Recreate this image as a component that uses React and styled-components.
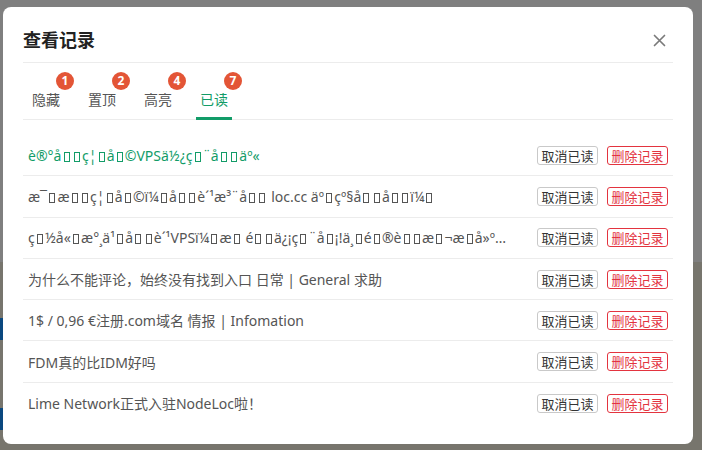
import React, { useState } from "react";
import styled, { createGlobalStyle } from "styled-components";

const GlobalStyle = createGlobalStyle`
  html, body {
    margin: 0;
    padding: 0;
    width: 702px;
    height: 450px;
    overflow: hidden;
    font-family: "Noto Sans", "Noto Sans CJK SC", sans-serif;
  }
`;

const records = [
  { id: 1, title: "记双福利VPS使用分享", garbled: true },
  { id: 2, title: "每月福利：免费注册 loc.cc 二级域名：", garbled: true },
  { id: 3, title: "白嫖永久免费VPS，无需信用卡!一键脚本搭建节点教程", garbled: true },
  { id: 4, title: "为什么不能评论，始终没有找到入口 日常 | General 求助" },
  { id: 5, title: "1$ / 0,96 €注册.com域名 情报 | Infomation" },
  { id: 6, title: "FDM真的比IDM好吗" },
  { id: 7, title: "Lime Network正式入驻NodeLoc啦！" },
];

const tabs = [
  { key: "hide", label: "隐藏", count: 1 },
  { key: "top", label: "置顶", count: 2 },
  { key: "light", label: "高亮", count: 4 },
  { key: "read", label: "已读", count: 7 },
];

// utf-8 bytes read as latin-1; C1 control bytes show as empty boxes
const garble = (s) => {
  const bytes = new TextEncoder().encode(s);
  const out = [];
  let buf = "";
  bytes.forEach((b, i) => {
    if (b >= 0x80 && b < 0xa0) {
      if (buf) out.push(buf);
      buf = "";
      out.push(<Box key={i} />);
    } else {
      buf += String.fromCharCode(b);
    }
  });
  if (buf) out.push(buf);
  return out;
};

const App = () => {
  const [active, setActive] = useState("read");

  return (
    <>
      <GlobalStyle />
      <Page>
        <SideMark $top={318} />
        <SideMark $top={408} />
      </Page>
      <Overlay>
        <Modal>
          <Header>
            <Title>查看记录</Title>
            <Close aria-label="close">
              <svg width="13" height="13" viewBox="0 0 13 13">
                <path
                  d="M1.5 1.5 L11.5 11.5 M11.5 1.5 L1.5 11.5"
                  stroke="#7a7a7a"
                  strokeWidth="1.7"
                  strokeLinecap="round"
                />
              </svg>
            </Close>
          </Header>
          <TabList>
            {tabs.map((t) => (
              <Tab
                key={t.key}
                $active={active === t.key}
                onClick={() => setActive(t.key)}
              >
                {t.label}
                <Badge>{t.count}</Badge>
              </Tab>
            ))}
          </TabList>
          <List>
            {records.map((r, idx) => (
              <Row key={r.id}>
                <RowTitle $first={idx === 0}>
                  {r.garbled ? garble(r.title) : r.title}
                </RowTitle>
                <Actions>
                  <Btn>取消已读</Btn>
                  <Btn $danger>删除记录</Btn>
                </Actions>
              </Row>
            ))}
          </List>
        </Modal>
      </Overlay>
    </>
  );
};

export default App;

const Page = styled.div`
  height: 450px;
  background: linear-gradient(#ffffff 0, #ffffff 262px, #efebdb 262px);
`;

const SideMark = styled.div`
  position: absolute;
  left: 0;
  top: ${(p) => p.$top}px;
  width: 4px;
  height: 22px;
  background: #1690ff;
`;

const Overlay = styled.div`
  position: fixed;
  inset: 0;
  background: rgba(0, 0, 0, 0.5);
  display: flex;
  align-items: flex-start;
  padding: 7px 0 0 3px;
`;

const Modal = styled.div`
  width: 690px;
  height: 437px;
  box-sizing: border-box;
  background: #fff;
  border-radius: 8px;
  padding: 0 20px 0 20px;
  display: flex;
  flex-direction: column;
`;

const Header = styled.div`
  display: flex;
  align-items: center;
  justify-content: space-between;
  padding: 22px 0 11px;
  border-bottom: 1px solid #ececec;
`;

const Title = styled.h3`
  margin: 0;
  font-size: 18px;
  line-height: 22px;
  font-weight: 700;
  color: #222;
`;

const Close = styled.button`
  border: none;
  background: none;
  padding: 0;
  margin-right: 7px;
  display: flex;
  cursor: pointer;
`;

const TabList = styled.div`
  display: flex;
  gap: 20px;
  padding: 27px 0 0 5px;
  border-bottom: 1px solid #ececec;
`;

const Tab = styled.div`
  position: relative;
  padding: 0 4px 7px;
  font-size: 14px;
  line-height: 20px;
  color: ${(p) => (p.$active ? "#129c68" : "#555")};
  border-bottom: 3px solid ${(p) => (p.$active ? "#129c68" : "transparent")};
  margin-bottom: -1px;
  cursor: pointer;
`;

const Badge = styled.span`
  position: absolute;
  left: 28px;
  top: -18px;
  width: 18px;
  height: 18px;
  border-radius: 50%;
  background: #e35536;
  color: #fff;
  font-size: 12px;
  font-weight: 700;
  line-height: 18px;
  text-align: center;
`;

const List = styled.div`
  margin-top: 15px;
`;

const Row = styled.div`
  display: flex;
  align-items: center;
  height: 41.3px;
  box-sizing: border-box;
  padding: 0 5px;
  border-bottom: 1px solid #ececec;
  &:last-child {
    border-bottom: none;
  }
`;

const RowTitle = styled.div`
  flex: 1;
  min-width: 0;
  margin-right: 26px;
  font-size: 14px;
  color: ${(p) => (p.$first ? "#129c68" : "#555")};
  white-space: nowrap;
  overflow: hidden;
  text-overflow: ellipsis;
`;

const Box = styled.span`
  display: inline-block;
  width: 4px;
  height: 8px;
  margin: 0 2.15px;
  border: 1px solid currentColor;
  vertical-align: -1px;
`;

const Actions = styled.div`
  display: flex;
  flex-shrink: 0;
  gap: 9px;
`;

const Btn = styled.button`
  height: 19px;
  padding: 0 3.5px;
  white-space: nowrap;
  font-family: "Noto Sans CJK SC", sans-serif;
  font-size: 13px;
  line-height: 17px;
  background: #fff;
  border: 1px solid ${(p) => (p.$danger ? "#e3343f" : "#c9c9c9")};
  color: ${(p) => (p.$danger ? "#e3343f" : "#333")};
  border-radius: 3px;
  cursor: pointer;
`;
